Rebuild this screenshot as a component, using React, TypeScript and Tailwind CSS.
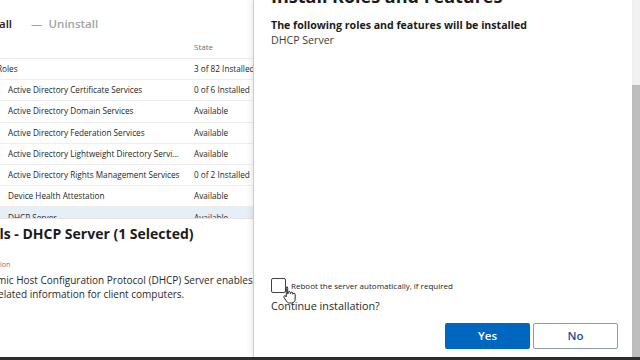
const rows = [
  { name: "Active Directory Certificate Services", state: "0 of 6 Installed" },
  { name: "Active Directory Domain Services", state: "Available" },
  { name: "Active Directory Federation Services", state: "Available" },
  { name: "Active Directory Lightweight Directory Servi...", state: "Available" },
  { name: "Active Directory Rights Management Services", state: "0 of 2 Installed" },
  { name: "Device Health Attestation", state: "Available" },
];

function HandCursor() {
  return (
    <svg width="13" height="18" viewBox="0 0 13 18" className="absolute left-[283px] top-[286px]">
      <path
        d="M3.5 1.2c.7 0 1.2.5 1.2 1.2v5.4h.4V6.6c0-.6.5-1.1 1.1-1.1s1.1.5 1.1 1.1v1.2h.3V7.3c0-.6.5-1.1 1.1-1.1s1.1.5 1.1 1.1v.9h.2c0-.6.5-1 1.1-1s1.1.5 1.1 1.1v4.5c0 2.3-1.5 4.2-3.6 4.2H6.3c-1.2 0-2-.6-2.7-1.6L1 11.5c-.4-.6-.2-1.3.4-1.6.5-.3 1.1-.1 1.5.3l.4.6V2.4c0-.7.5-1.2 1.2-1.2z"
        fill="#fff"
        stroke="#111"
        strokeWidth="0.9"
        strokeLinejoin="round"
      />
    </svg>
  );
}

export default function App() {
  return (
    <div
      className="relative w-[640px] h-[360px] overflow-hidden bg-white flex flex-col"
      style={{ fontFamily: '"Open Sans", "Noto Sans", Arial, sans-serif' }}
    >
      <div className="flex flex-1 min-h-0">
        {/* Background page, cut on the left */}
        <div className="w-[254px] shrink-0 overflow-hidden bg-white flex flex-col border-r border-[#d9d9d9]">
          <div className="h-[14px]" />
          <div className="flex items-center h-[20px] text-[11.5px] font-semibold whitespace-nowrap">
            <span className="text-[#1b1b1b] ml-[-22px]">Install</span>
            <span className="text-[#a0a0a0] ml-[19px] font-normal">—</span>
            <span className="text-[#a3a3a3] ml-[6px]">Uninstall</span>
          </div>
          <div className="flex items-center h-[23px] mt-[2px] border-b border-[#ebebeb] text-[8px] text-[#6d6d6d]">
            <span className="ml-[194px]">State</span>
          </div>
          <div className="h-[159px] shrink-0 overflow-hidden text-[8.2px] text-[#262626] whitespace-nowrap">
            <div className="flex items-center h-[21.3px] border-b border-[#eeeeee]">
              <span className="w-[197px] shrink-0 ml-[-3px]">Roles</span>
              <span>3 of 82 Installed</span>
            </div>
            {rows.map((r) => (
              <div key={r.name} className="flex items-center h-[21.2px] border-b border-[#eeeeee]">
                <span className="w-[186px] shrink-0 ml-[8px]">{r.name}</span>
                <span>{r.state}</span>
              </div>
            ))}
            <div className="flex items-center h-[21.2px] bg-[#e6eef8]">
              <span className="w-[186px] shrink-0 ml-[8px]">DHCP Server</span>
              <span>Available</span>
            </div>
          </div>
          <div className="border-t border-[#e3e3e3] pt-[4px]">
            <div className="text-[14px] font-bold text-[#1b1b1b] whitespace-nowrap ml-[-38px] leading-[22px]">
              Details - DHCP Server (1 Selected)
            </div>
            <div className="text-[7px] text-[#777] whitespace-nowrap ml-[-27px] mt-[15px]">Description</div>
            <div className="text-[10px] text-[#2a2a2a] leading-[14px] mt-[2px] whitespace-nowrap">
              <div className="ml-[-27px]">Dynamic Host Configuration Protocol (DHCP) Server enables</div>
              <div className="ml-[-6px]">related information for client computers.</div>
            </div>
          </div>
        </div>

        {/* Dialog panel */}
        <div className="relative flex-1 flex flex-col bg-white pl-[17px] pr-[14px] shadow-[-3px_0_6px_rgba(0,0,0,0.08)]">
          <div className="text-[18px] font-bold text-[#1b1b1b] leading-[22px] mt-[-15px] whitespace-nowrap">
            Install Roles and Features
          </div>
          <div className="text-[10.6px] font-bold text-[#1b1b1b] mt-[11px] leading-[15px]">
            The following roles and features will be installed
          </div>
          <div className="text-[10.6px] text-[#3c3c3c] leading-[15px]">DHCP Server</div>
          <div className="flex-1" />
          <div className="flex items-center gap-[5px]">
            <div className="w-[15px] h-[15px] border border-[#444] rounded-[2px] bg-white" />
            <span className="text-[8px] text-[#222]">Reboot the server automatically, if required</span>
          </div>
          <div className="text-[10.8px] text-[#1f1f1f] mt-[4px] leading-[18px]">Continue installation?</div>
          <div className="flex justify-end gap-[3px] mt-[8px] mb-[8px]">
            <button className="w-[85px] h-[26px] bg-[#0067c0] text-white text-[11.5px] font-semibold rounded-[2px]">
              Yes
            </button>
            <button className="w-[85px] h-[26px] bg-white border border-[#8a9bb3] text-[#1c4f8f] text-[11.5px] font-semibold rounded-[2px]">
              No
            </button>
          </div>
        </div>

        {/* Right strip */}
        <div className="w-[8px] shrink-0 flex flex-col">
          <div className="h-[85px] bg-[#f1f1f1]" />
          <div className="flex-1 bg-[#bdbdbd]" />
        </div>
      </div>
      <div className="h-[3px] bg-[#2e2e2e]" />
      <HandCursor />
    </div>
  );
}
